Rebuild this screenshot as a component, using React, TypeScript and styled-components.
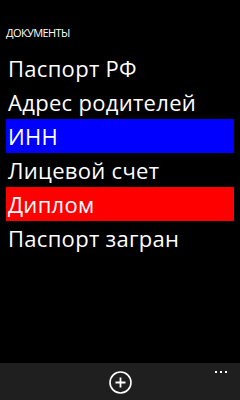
import React from "react";
import styled, { createGlobalStyle } from "styled-components";

const Global = createGlobalStyle`
  html, body { margin: 0; padding: 0; background: #000; }
  body { width: 240px; height: 400px; overflow: hidden; font-family: "Open Sans", "Noto Sans", sans-serif; }
`;

const Page = styled.div`
  width: 240px;
  height: 400px;
  display: flex;
  flex-direction: column;
  background: #000;
  color: #fff;
`;

const Header = styled.div`
  padding: 27px 0 0 6px;
  height: 24px;
  font-size: 11px;
  line-height: 12px;
  letter-spacing: -0.6px;
`;

const List = styled.div`
  flex: 1;
  display: flex;
  flex-direction: column;
  padding: 0 6px;
`;

const Row = styled.div<{ $bg?: string }>`
  height: 34px;
  display: flex;
  align-items: center;
  padding-left: 2px;
  background: ${(p) => p.$bg || "transparent"};
  font-size: 22px;
  line-height: 34px;
  letter-spacing: 0.3px;
  white-space: nowrap;
`;

const AppBar = styled.div`
  height: 37px;
  background: #1f1f1f;
  display: flex;
  justify-content: center;
  position: relative;
`;

const RoundButton = styled.div`
  margin-top: 8px;
  width: 23px;
  height: 23px;
  display: flex;
  align-items: center;
  justify-content: center;
`;

const Dots = styled.div`
  position: absolute;
  right: 13px;
  top: 8px;
  display: flex;
  gap: 3px;
`;

const Dot = styled.span`
  width: 2px;
  height: 2px;
  background: #fff;
`;

const items: { label: string; bg?: string }[] = [
  { label: "Паспорт РФ" },
  { label: "Адрес родителей" },
  { label: "ИНН", bg: "#0000ff" },
  { label: "Лицевой счет" },
  { label: "Диплом", bg: "#ff0000" },
  { label: "Паспорт загран" },
];

export default function App() {
  return (
    <Page>
      <Global />
      <Header>ДОКУМЕНТЫ</Header>
      <List>
        {items.map((it) => (
          <Row key={it.label} $bg={it.bg}>
            {it.label}
          </Row>
        ))}
      </List>
      <AppBar>
        <RoundButton>
          <svg width="23" height="23" viewBox="0 0 23 23">
            <circle cx="11.5" cy="11.5" r="10.5" fill="none" stroke="#fff" strokeWidth="1.6" />
            <path d="M11.5 6.5v10M6.5 11.5h10" stroke="#fff" strokeWidth="1.8" />
          </svg>
        </RoundButton>
        <Dots>
          <Dot />
          <Dot />
          <Dot />
        </Dots>
      </AppBar>
    </Page>
  );
}
